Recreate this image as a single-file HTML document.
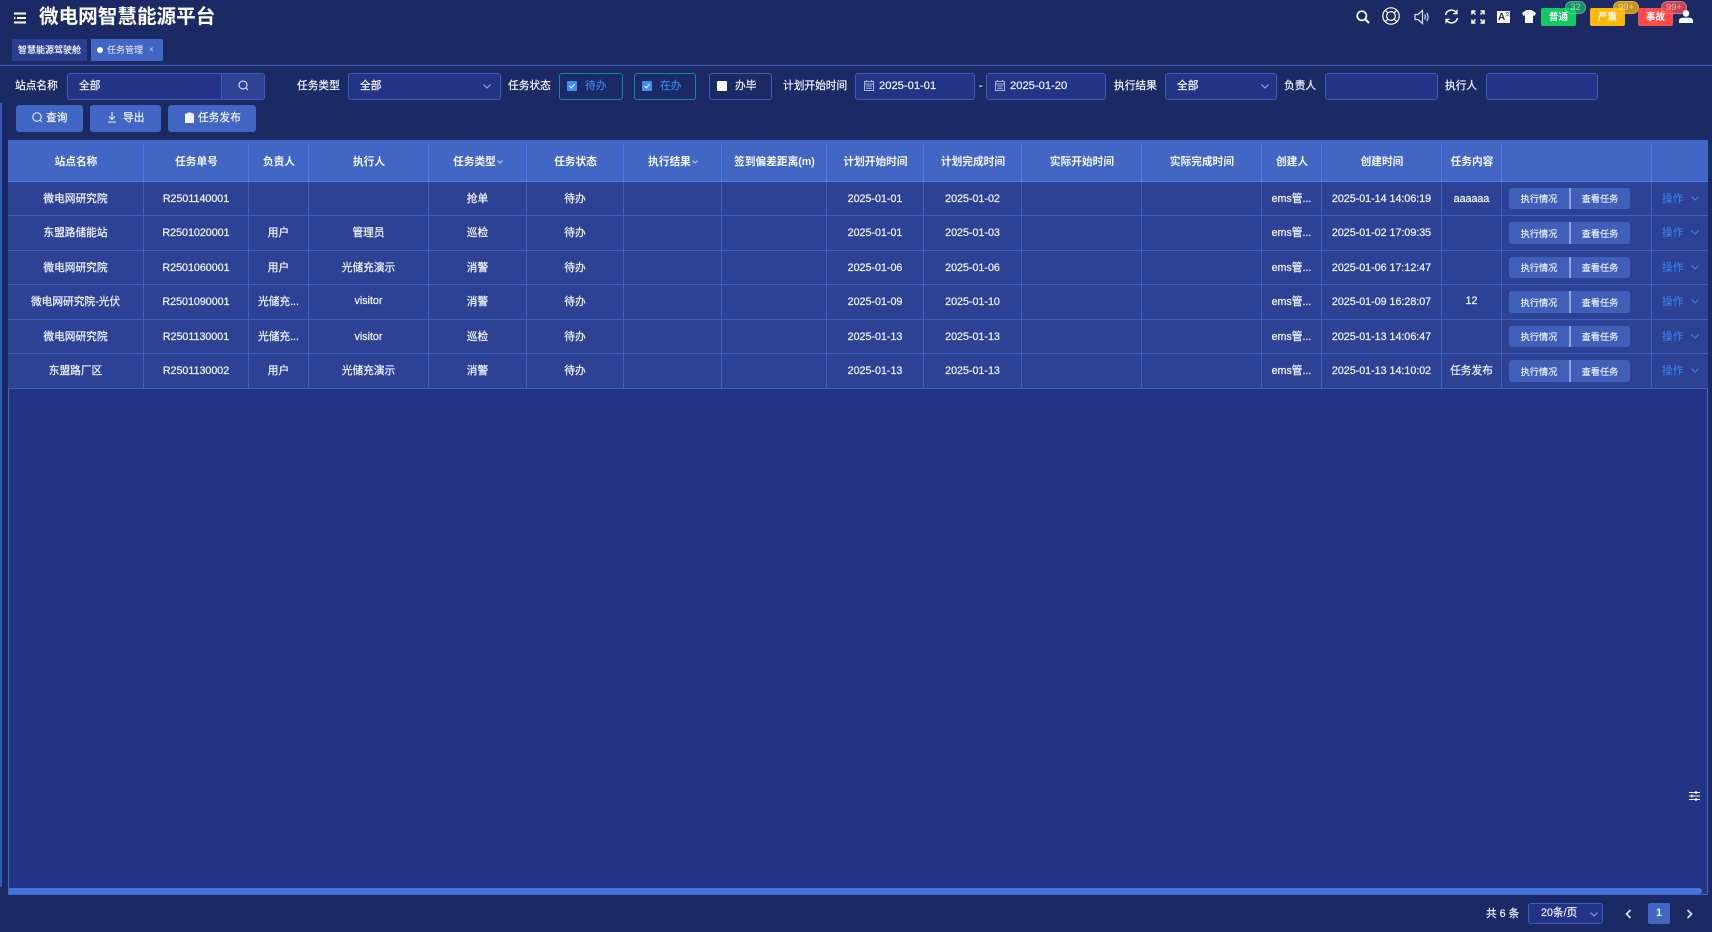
<!DOCTYPE html>
<html lang="zh"><head><meta charset="utf-8"><title>微电网智慧能源平台</title>
<style>
*{box-sizing:border-box}
html,body{margin:0;padding:0;width:1712px;height:932px;overflow:hidden;background:#1b2a65;color:#f0f4ff;font-family:"Liberation Sans","Noto Sans CJK SC",sans-serif;font-size:10.7px}
.a{position:absolute}
.lb{position:absolute;top:73px;height:27px;line-height:27px;font-size:10.7px;color:#f2f5ff;white-space:nowrap;-webkit-text-stroke:.2px #f2f5ff}
.in{position:absolute;top:73px;height:27px;background:#233386;border:1px solid #3c5cb6;border-radius:3px;line-height:25px;padding-left:11px;font-size:10.7px;color:#f2f5ff;-webkit-text-stroke:.2px #f2f5ff}
.in svg{-webkit-text-stroke:0}
.chk{position:absolute;top:73px;height:27px;border:1px solid #0e8a9c;border-radius:3px;line-height:25px;font-size:10.7px;color:#3585ee;-webkit-text-stroke:.15px currentColor}
.chk i{position:absolute;left:7px;top:7px;width:10px;height:10px;background:#3f8ff0;border-radius:1px}
.chk span{position:absolute;left:25px;top:0}
.btn{position:absolute;top:105px;height:27px;background:#4266c4;border-radius:3px;line-height:27px;font-size:10.7px;color:#f2f5ff;-webkit-text-stroke:.2px #f2f5ff}
.btn span{position:absolute;top:0;white-space:nowrap}
table{position:absolute;left:8px;top:140px;width:1700px;border-collapse:separate;border-spacing:0;table-layout:fixed}
th{background:#4266c4;height:42px;padding:2px 0 0;font-size:10.7px;font-weight:bold;color:#f4f7ff;position:relative;border-bottom:1px solid #4a78e8;white-space:nowrap}
th:not(:last-child)::after{content:"";position:absolute;right:0;top:3px;bottom:0;width:1px;background:#4a78e8}
td{background:#2e4295;padding:0;text-align:center;font-size:10.7px;color:#eef2ff;border-right:1px solid #3f5fbf;border-bottom:1px solid #3f5fbf;position:relative;white-space:nowrap;-webkit-text-stroke:.25px #eef2ff}
tr:nth-child(even) td:nth-child(1),tr:nth-child(even) td:nth-child(3),tr:nth-child(even) td:nth-child(4),tr:nth-child(even) td:nth-child(5),tr:nth-child(even) td:nth-child(6),tr:nth-child(even) td:nth-child(13),tr:nth-child(even) td:nth-child(15),tr:nth-child(even) td:nth-child(17){padding-bottom:2px}
td:last-child{border-right:0}
.bs{position:absolute;left:7px;top:6px;width:121px;background:#3f5fb8;border-radius:3px;font-size:9.2px;-webkit-text-stroke:.15px #eef2ff}
.bs b{position:absolute;top:0;bottom:0;font-weight:normal;line-height:23px;text-align:center;width:60px}
tr:nth-child(even) .bs b{line-height:25px}
.bs b:first-child{left:0}.bs b:last-child{left:61px}
.bs u{position:absolute;left:60px;top:0;bottom:0;width:2px;background:#8fa3dc}
.op{color:#3585ee;-webkit-text-stroke:0;text-align:left;padding-left:10px}
.op svg{position:absolute;left:39px;top:14px}
.ch{display:inline-block;vertical-align:middle;margin-left:1px}
.tag{position:absolute;top:8px;width:35px;height:18px;border-radius:2px;text-align:center;line-height:20px;font-size:9.5px;color:#fff;font-weight:bold}
.bd{position:absolute;top:1px;height:13px;border-radius:7px;text-align:center;line-height:12px;font-size:9.5px;color:rgba(255,255,255,.6);border:1px solid rgba(255,255,255,.28)}
</style></head><body>
<div class="a" style="left:0;top:103px;width:2px;height:784px;background:#3358b8"></div>

<svg class="a" style="left:13px;top:12px" width="14" height="12" viewBox="0 0 14 12"><path d="M1 1.5H13M4 6H13M1 10.5H13" stroke="#fff" stroke-width="2"/><path d="M1 4.5L3 6 1 7.5z" fill="#fff"/></svg>
<div class="a" style="left:39px;top:4px;font-size:19.6px;font-weight:bold;color:#fff;line-height:27px;white-space:nowrap">微电网智慧能源平台</div>

<div class="a" style="left:12px;top:39px;width:75px;height:22px;background:#2a3f8f;text-align:center;line-height:22px;font-size:9px;white-space:nowrap;-webkit-text-stroke:.2px #f0f4ff">智慧能源驾驶舱</div>
<div class="a" style="left:91px;top:39px;width:72px;height:22px;background:#4266c4;line-height:22px;font-size:9px"><i class="a" style="left:6px;top:8px;width:6px;height:6px;border-radius:50%;background:#fff"></i><span class="a" style="left:16px;white-space:nowrap">任务管理</span><span class="a" style="left:58px;font-size:8px;color:#cfd9f5">×</span></div>
<div class="a" style="left:0;top:65px;width:1712px;height:1px;background:#3e5fb8"></div>

<!-- top icons -->
<svg class="a" style="left:1356px;top:10px" width="14" height="14" viewBox="0 0 14 14" fill="none" stroke="#fff"><circle cx="5.8" cy="5.8" r="4.6" stroke-width="1.7"/><path d="M9.2 9.2L13 13" stroke-width="2.2"/></svg>
<svg class="a" style="left:1382px;top:7px" width="18" height="18" viewBox="0 0 18 18" fill="none" stroke="#fff" stroke-width="1.2"><circle cx="9" cy="9" r="8.2"/><circle cx="9" cy="9" r="4.4"/><path d="M3.2 3.2L5.9 5.9M14.8 3.2L12.1 5.9M3.2 14.8L5.9 12.1M14.8 14.8L12.1 12.1"/></svg>
<svg class="a" style="left:1414px;top:9px" width="16" height="16" viewBox="0 0 16 16" fill="none" stroke="#d8e0f5" stroke-width="1.2"><path d="M1 5.5H4L8.5 1.5V14.5L4 10.5H1Z"/><path d="M10.7 5.5Q12 8 10.7 10.5M12.8 3.8Q15.2 8 12.8 12.2"/></svg>
<svg class="a" style="left:1444px;top:9px" width="15" height="15" viewBox="0 0 15 15" fill="none" stroke="#fff" stroke-width="1.5"><path d="M1.5 6A6 6 0 0 1 12.5 4M13.5 9A6 6 0 0 1 2.5 11"/><path d="M13 .8V4.6H9.2M2 14.2V10.4H5.8" stroke-width="1.2"/></svg>
<svg class="a" style="left:1471px;top:10px" width="14" height="14" viewBox="0 0 14 14" fill="none" stroke="#fff" stroke-width="1.5"><path d="M1 4.5V1H4.5M1 1L4.5 4.5M13 4.5V1H9.5M13 1L9.5 4.5M1 9.5V13H4.5M1 13L4.5 9.5M13 9.5V13H9.5M13 13L9.5 9.5"/></svg>
<div class="a" style="left:1497px;top:11px;width:13px;height:12px;background:#fff;color:#1b2a65;font-size:10px;font-weight:bold;line-height:14px;padding-left:1px">A<span class="a" style="left:8px;top:-3px;font-size:5px;color:#6a76a8">文</span></div>
<svg class="a" style="left:1522px;top:10px" width="14" height="13" viewBox="0 0 14 13"><path d="M4.5 0H9.5L14 3 12.5 6 11 5.2V13H3V5.2L1.5 6 0 3Z" fill="#fff"/></svg>
<div class="tag" style="left:1541px;background:#14c864">普通</div>
<div class="bd" style="left:1565px;width:21px;background:rgba(20,200,100,.65)">32</div>
<div class="tag" style="left:1590px;background:#ffb800">严重</div>
<div class="bd" style="left:1613px;width:26px;background:rgba(255,184,0,.75)">99+</div>
<div class="tag" style="left:1638px;background:#ff4b4b">事故</div>
<div class="bd" style="left:1661px;width:26px;background:rgba(255,75,75,.75)">99+</div>
<svg class="a" style="left:1679px;top:10px" width="14" height="13" viewBox="0 0 14 13" fill="#fff"><circle cx="7" cy="3.4" r="3.3"/><path d="M0 13V11Q0 7.8 4 7.8H10Q14 7.8 14 11V13Z"/></svg>

<!-- filters -->
<div class="lb" style="left:15px">站点名称</div>
<div class="in" style="left:67px;width:198px">全部<i class="a" style="left:153px;top:0;width:1px;height:25px;background:#3c5cb6"></i><i class="a" style="left:154px;top:0;width:42px;height:25px;background:#2e4295;border-radius:0 3px 3px 0"></i><svg class="a" style="left:170px;top:6px" width="11" height="11" viewBox="0 0 11 11" fill="none" stroke="#eef2ff"><circle cx="5" cy="5" r="4"/><path d="M8 8L10 10"/></svg></div>
<div class="lb" style="left:297px">任务类型</div>
<div class="in" style="left:348px;width:153px">全部<svg class="a" style="left:134px;top:10px" width="8" height="5" viewBox="0 0 8 5" fill="none" stroke="#9fb0df"><path d="M.5 .5L4 4 7.5 .5"/></svg></div>
<div class="lb" style="left:508px">任务状态</div>
<div class="chk" style="left:559px;width:64px"><i></i><svg class="a" style="left:9px;top:9px" width="6" height="6" viewBox="0 0 6 6" fill="none" stroke="#fff"><path d="M.5 3L2.3 5 5.5 1"/></svg><span>待办</span></div>
<div class="chk" style="left:634px;width:62px"><i></i><svg class="a" style="left:9px;top:9px" width="6" height="6" viewBox="0 0 6 6" fill="none" stroke="#fff"><path d="M.5 3L2.3 5 5.5 1"/></svg><span>在办</span></div>
<div class="chk" style="left:709px;width:63px;border-color:#3c5cb6;color:#f2f5ff"><i style="background:#fff"></i><span>办毕</span></div>
<div class="lb" style="left:783px">计划开始时间</div>
<div class="in" style="left:855px;width:120px;padding-left:23px;font-size:11.2px"><svg class="a" style="left:8px;top:6px" width="10" height="11" viewBox="0 0 10 11" fill="none" stroke="#aab8de"><path d="M.5 1.5H9.5V10.5H.5ZM.5 4H9.5M2 6H8M2 8.2H8M2.5 0V2M7.5 0V2"/></svg>2025-01-01</div>
<div class="lb" style="left:979px">-</div>
<div class="in" style="left:986px;width:120px;padding-left:23px;font-size:11.2px"><svg class="a" style="left:8px;top:6px" width="10" height="11" viewBox="0 0 10 11" fill="none" stroke="#aab8de"><path d="M.5 1.5H9.5V10.5H.5ZM.5 4H9.5M2 6H8M2 8.2H8M2.5 0V2M7.5 0V2"/></svg>2025-01-20</div>
<div class="lb" style="left:1114px">执行结果</div>
<div class="in" style="left:1165px;width:112px">全部<svg class="a" style="left:95px;top:10px" width="8" height="5" viewBox="0 0 8 5" fill="none" stroke="#9fb0df"><path d="M.5 .5L4 4 7.5 .5"/></svg></div>
<div class="lb" style="left:1284px">负责人</div>
<div class="in" style="left:1325px;width:113px"></div>
<div class="lb" style="left:1445px">执行人</div>
<div class="in" style="left:1486px;width:112px"></div>

<div class="btn" style="left:16px;width:67px"><svg class="a" style="left:16px;top:7px" width="11" height="11" viewBox="0 0 11 11" fill="none" stroke="#f2f5ff"><circle cx="5" cy="5" r="4.2"/><path d="M8 8L10 10"/></svg><span style="left:30px">查询</span></div>
<div class="btn" style="left:90px;width:71px"><svg class="a" style="left:17px;top:7px" width="10" height="11" viewBox="0 0 10 11" fill="none" stroke="#f2f5ff"><path d="M5 0V7M2 4.5L5 7.5 8 4.5M1 10H9"/></svg><span style="left:33px">导出</span></div>
<div class="btn" style="left:168px;width:88px"><svg class="a" style="left:17px;top:7px" width="9" height="11" viewBox="0 0 9 11" fill="#f2f5ff"><path d="M0 1.5H2.5V.5H6.5V1.5H9V11H0Z"/></svg><span style="left:30px">任务发布</span></div>

<!-- table area -->
<div class="a" style="left:8px;top:140px;width:1700px;height:755px;background:#233386;border-left:1px solid #3f66c8;border-right:1px solid #3f66c8;border-bottom:1px solid #3f66c8"></div>
<table><colgroup><col style="width:136px"><col style="width:105px"><col style="width:60px"><col style="width:120px"><col style="width:98px"><col style="width:97px"><col style="width:98px"><col style="width:105px"><col style="width:97px"><col style="width:98px"><col style="width:120px"><col style="width:120px"><col style="width:60px"><col style="width:120px"><col style="width:60px"><col style="width:150px"><col style="width:56px"></colgroup>
<thead><tr><th>站点名称</th><th>任务单号</th><th>负责人</th><th>执行人</th><th>任务类型<svg class="ch" width="6" height="4" viewBox="0 0 6 4" fill="none" stroke="#c3cfee"><path d="M.5 .5L3 3 5.5 .5"/></svg></th><th>任务状态</th><th>执行结果<svg class="ch" width="6" height="4" viewBox="0 0 6 4" fill="none" stroke="#c3cfee"><path d="M.5 .5L3 3 5.5 .5"/></svg></th><th>签到偏差距离(m)</th><th>计划开始时间</th><th>计划完成时间</th><th>实际开始时间</th><th>实际完成时间</th><th>创建人</th><th>创建时间</th><th>任务内容</th><th></th><th></th></tr></thead>
<tbody>
<tr style="height:34px"><td>微电网研究院</td><td>R2501140001</td><td></td><td></td><td>抢单</td><td>待办</td><td></td><td></td><td>2025-01-01</td><td>2025-01-02</td><td></td><td></td><td>ems管...</td><td>2025-01-14 14:06:19</td><td>aaaaaa</td><td><div class="bs" style="height:21px"><b>执行情况</b><u></u><b>查看任务</b></div></td><td class="op">操作<svg width="8" height="5" viewBox="0 0 8 5" fill="none" stroke="#3585ee"><path d="M.5 .5L4 4 7.5 .5"/></svg></td></tr>
<tr style="height:35px"><td>东盟路储能站</td><td>R2501020001</td><td>用户</td><td>管理员</td><td>巡检</td><td>待办</td><td></td><td></td><td>2025-01-01</td><td>2025-01-03</td><td></td><td></td><td>ems管...</td><td>2025-01-02 17:09:35</td><td></td><td><div class="bs" style="height:22px"><b>执行情况</b><u></u><b>查看任务</b></div></td><td class="op">操作<svg width="8" height="5" viewBox="0 0 8 5" fill="none" stroke="#3585ee"><path d="M.5 .5L4 4 7.5 .5"/></svg></td></tr>
<tr style="height:34px"><td>微电网研究院</td><td>R2501060001</td><td>用户</td><td>光储充演示</td><td>消警</td><td>待办</td><td></td><td></td><td>2025-01-06</td><td>2025-01-06</td><td></td><td></td><td>ems管...</td><td>2025-01-06 17:12:47</td><td></td><td><div class="bs" style="height:21px"><b>执行情况</b><u></u><b>查看任务</b></div></td><td class="op">操作<svg width="8" height="5" viewBox="0 0 8 5" fill="none" stroke="#3585ee"><path d="M.5 .5L4 4 7.5 .5"/></svg></td></tr>
<tr style="height:35px"><td>微电网研究院-光伏</td><td>R2501090001</td><td>光储充...</td><td>visitor</td><td>消警</td><td>待办</td><td></td><td></td><td>2025-01-09</td><td>2025-01-10</td><td></td><td></td><td>ems管...</td><td>2025-01-09 16:28:07</td><td>12</td><td><div class="bs" style="height:22px"><b>执行情况</b><u></u><b>查看任务</b></div></td><td class="op">操作<svg width="8" height="5" viewBox="0 0 8 5" fill="none" stroke="#3585ee"><path d="M.5 .5L4 4 7.5 .5"/></svg></td></tr>
<tr style="height:34px"><td>微电网研究院</td><td>R2501130001</td><td>光储充...</td><td>visitor</td><td>巡检</td><td>待办</td><td></td><td></td><td>2025-01-13</td><td>2025-01-13</td><td></td><td></td><td>ems管...</td><td>2025-01-13 14:06:47</td><td></td><td><div class="bs" style="height:21px"><b>执行情况</b><u></u><b>查看任务</b></div></td><td class="op">操作<svg width="8" height="5" viewBox="0 0 8 5" fill="none" stroke="#3585ee"><path d="M.5 .5L4 4 7.5 .5"/></svg></td></tr>
<tr style="height:35px"><td>东盟路厂区</td><td>R2501130002</td><td>用户</td><td>光储充演示</td><td>消警</td><td>待办</td><td></td><td></td><td>2025-01-13</td><td>2025-01-13</td><td></td><td></td><td>ems管...</td><td>2025-01-13 14:10:02</td><td>任务发布</td><td><div class="bs" style="height:22px"><b>执行情况</b><u></u><b>查看任务</b></div></td><td class="op">操作<svg width="8" height="5" viewBox="0 0 8 5" fill="none" stroke="#3585ee"><path d="M.5 .5L4 4 7.5 .5"/></svg></td></tr>
</tbody></table>

<svg class="a" style="left:1689px;top:791px" width="11" height="10" viewBox="0 0 11 10" stroke="#f2f5ff"><path d="M0 1.5H11M0 5H11M0 8.5H11" stroke-width="1"/><path d="M7 0V3M3 3.5V6.5M7 7V10" stroke-width="1.4"/></svg>
<div class="a" style="left:9px;top:888px;width:1693px;height:6px;background:#4474dc;border-radius:0 3px 3px 0"></div>

<!-- pagination -->
<div class="a" style="left:1486px;top:907px;line-height:14px;font-size:10.7px;white-space:nowrap;-webkit-text-stroke:.2px #f0f4ff">共 6 条</div>
<div class="in" style="left:1528px;top:903px;width:75px;height:21px;line-height:19px;padding-left:12px;white-space:nowrap">20条/页<svg class="a" style="left:61px;top:8px" width="8" height="5" viewBox="0 0 8 5" fill="none" stroke="#8fa3dc"><path d="M.5 .5L4 4 7.5 .5"/></svg></div>
<svg class="a" style="left:1625px;top:909px" width="7" height="10" viewBox="0 0 7 10" fill="none" stroke="#dfe6fa" stroke-width="1.6"><path d="M5.5 1L1.5 5 5.5 9"/></svg>
<div class="a" style="left:1648px;top:903px;width:22px;height:21px;background:#4266c4;border-radius:2px;text-align:center;line-height:21px;font-weight:bold;font-size:10.7px">1</div>
<svg class="a" style="left:1686px;top:909px" width="7" height="10" viewBox="0 0 7 10" fill="none" stroke="#dfe6fa" stroke-width="1.6"><path d="M1.5 1L5.5 5 1.5 9"/></svg>
</body></html>
